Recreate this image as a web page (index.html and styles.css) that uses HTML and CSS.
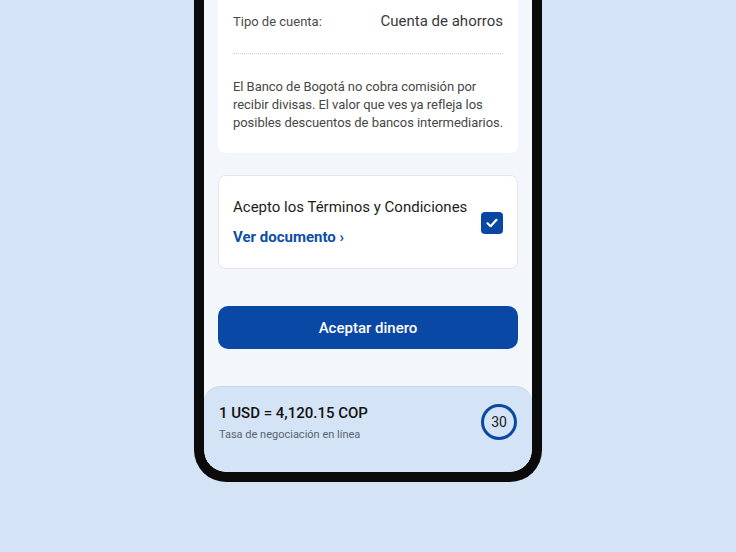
FILE: index.html
```html
<!DOCTYPE html>
<html lang="es">
<head>
<meta charset="utf-8">
<link rel="stylesheet" href="styles.css">
</head>
<body>
<div class="phone">
  <div class="screen">
    <div class="card info">
      <div class="row">
        <span class="label">Tipo de cuenta:</span>
        <span class="value">Cuenta de ahorros</span>
      </div>
      <div class="divider"></div>
      <p class="note">El Banco de Bogotá no cobra comisión por recibir divisas. El valor que ves ya refleja los posibles descuentos de bancos intermediarios.</p>
    </div>
    <div class="card terms">
      <div class="terms-text">
        <div class="terms-title">Acepto los Términos y Condiciones</div>
        <a class="terms-link">Ver documento ›</a>
      </div>
      <div class="checkbox">
        <svg width="14" height="14" viewBox="0 0 14 14"><path d="M2.5 7.3 L5.6 10.2 L11.5 3.8" fill="none" stroke="#fff" stroke-width="2.2" stroke-linecap="round" stroke-linejoin="round"/></svg>
      </div>
    </div>
    <button class="primary">Aceptar dinero</button>
    <div class="rate">
      <div class="rate-text">
        <div class="rate-value">1 USD = 4,120.15 COP</div>
        <div class="rate-sub">Tasa de negociación en línea</div>
      </div>
      <div class="timer">30</div>
    </div>
  </div>
</div>
</body>
</html>
```
FILE: styles.css
```css
* { box-sizing: border-box; }
html, body { margin: 0; padding: 0; }
body {
  width: 736px;
  height: 552px;
  background: #d4e4f6;
  font-family: Roboto, "Noto Sans", sans-serif;
  display: flex;
  justify-content: center;
  align-items: flex-start;
  overflow: hidden;
}
.phone {
  width: 348px;
  height: 482px;
  background: #000;
  border: 10px solid #0b0b0b;
  border-top: none;
  border-radius: 0 0 32px 32px;
  overflow: hidden;
}
.screen {
  height: 100%;
  background: #f3f7fc;
  border-radius: 0 0 22px 22px;
  overflow: hidden;
  display: flex;
  flex-direction: column;
  padding: 0 14px;
}
.card {
  background: #fff;
  border-radius: 8px;
}
.info {
  height: 153px;
  border-radius: 0 0 8px 8px;
  padding: 10px 15px 0 15px;
}
.row {
  display: flex;
  justify-content: space-between;
  align-items: baseline;
  height: 22px;
}
.label { font-size: 13px; color: #4a4a4a; line-height: 20px; }
.value { font-size: 15px; color: #3a3a3a; line-height: 22px; }
.divider {
  margin-top: 21px;
  border-top: 1px dotted #cfd3d8;
}
.note {
  margin: 24px -8px 0 0;
  font-size: 13px;
  letter-spacing: -0.05px;
  line-height: 18px;
  color: #474747;
}
.terms {
  margin-top: 22px;
  height: 94px;
  border: 1px solid #e2e7ee;
  display: flex;
  align-items: center;
  justify-content: space-between;
  padding: 0 14px;
}
.terms-text { display: flex; flex-direction: column; gap: 10px; }
.terms-title { font-size: 15px; line-height: 20px; color: #1c1c1c; }
.terms-link { font-size: 15px; line-height: 20px; font-weight: 700; color: #0d4ea6; }
.checkbox {
  width: 22px;
  height: 22px;
  border-radius: 4px;
  background: #0a47a3;
  display: flex;
  align-items: center;
  justify-content: center;
  margin-top: 1px;
}
.primary {
  margin-top: 37px;
  height: 43px;
  border: none;
  border-radius: 10px;
  background: #0a48a6;
  color: #fff;
  font-family: Roboto, "Noto Sans", sans-serif;
  font-size: 15px;
  font-weight: 500;
}
.rate {
  margin: 37px -14px 0 -14px;
  flex: 1;
  background: #d4e4f6;
  border-top: 1px solid #c7d9ee;
  border-radius: 16px 16px 0 0;
  display: flex;
  justify-content: space-between;
  align-items: flex-start;
  padding: 16px 15px 0 15px;
}
.rate-text { display: flex; flex-direction: column; gap: 4px; }
.rate-value { font-size: 15px; line-height: 20px; font-weight: 500; color: #111; }
.rate-sub { font-size: 11px; line-height: 16px; color: #5a6270; }
.timer {
  margin-top: 1px;
  width: 36px;
  height: 36px;
  border: 3px solid #0a48a6;
  border-radius: 50%;
  display: flex;
  align-items: center;
  justify-content: center;
  font-size: 14px;
  color: #1a1a1a;
}
```
